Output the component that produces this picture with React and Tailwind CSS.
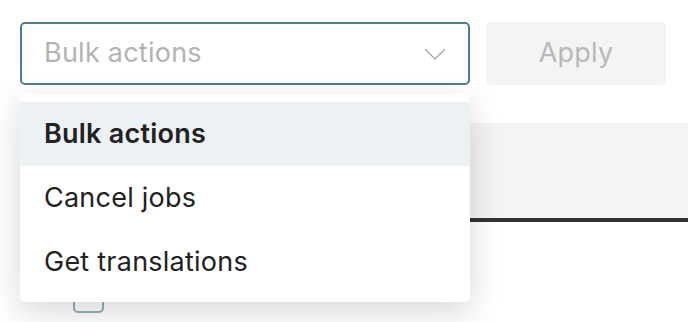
import React from 'react';

const items = [
    { label: 'Bulk actions', active: true },
    { label: 'Cancel jobs' },
    { label: 'Get translations' },
];

const App = () => {
    return (
        <div className="relative w-[688px] h-[322px] overflow-hidden bg-white tracking-[0.015em]" style={{ fontFamily: 'Inter, "Noto Sans", sans-serif' }}>
            {/* toolbar */}
            <div className="flex gap-4 pt-[22px] pl-5">
                <div className="w-[450px] h-[63px] flex items-center justify-between border-2 border-[#4a7f94] rounded-[5px] pl-[22px] pr-[22px] bg-white">
                    <span className="text-[27px] text-[#b3b3b3]">Bulk actions</span>
                    <svg width="22" height="12" viewBox="0 0 22 12" fill="none">
                        <path d="M1 1l10 10L21 1" stroke="#a8a8a8" strokeWidth="1.3" />
                    </svg>
                </div>
                <button className="w-[180px] h-[63px] rounded-[5px] bg-[#f4f4f4] text-[27px] text-[#b8b8b8]">Apply</button>
            </div>

            {/* table behind */}
            <div className="mt-[38px] ml-5">
                <div className="h-[99px] bg-[#f4f4f4] border-b-4 border-[#333333]"></div>
                <div className="pl-[53px] pt-[60px]">
                    <div className="w-[31px] h-[31px] border-2 border-[#93b1bd] rounded-[5px]"></div>
                </div>
            </div>

            {/* dropdown menu */}
            <div className="absolute left-5 top-[94px] w-[450px] bg-white rounded-[5px] py-2 shadow-[0_10px_32px_rgba(0,0,0,0.16)]">
                {items.map((item) => (
                    <div
                        key={item.label}
                        className={`h-16 flex items-center pl-6 text-[27px] text-[#222222] ${item.active ? 'bg-[#ecf1f4] font-semibold' : ''}`}
                    >
                        {item.label}
                    </div>
                ))}
            </div>
        </div>
    );
};

export default App;
